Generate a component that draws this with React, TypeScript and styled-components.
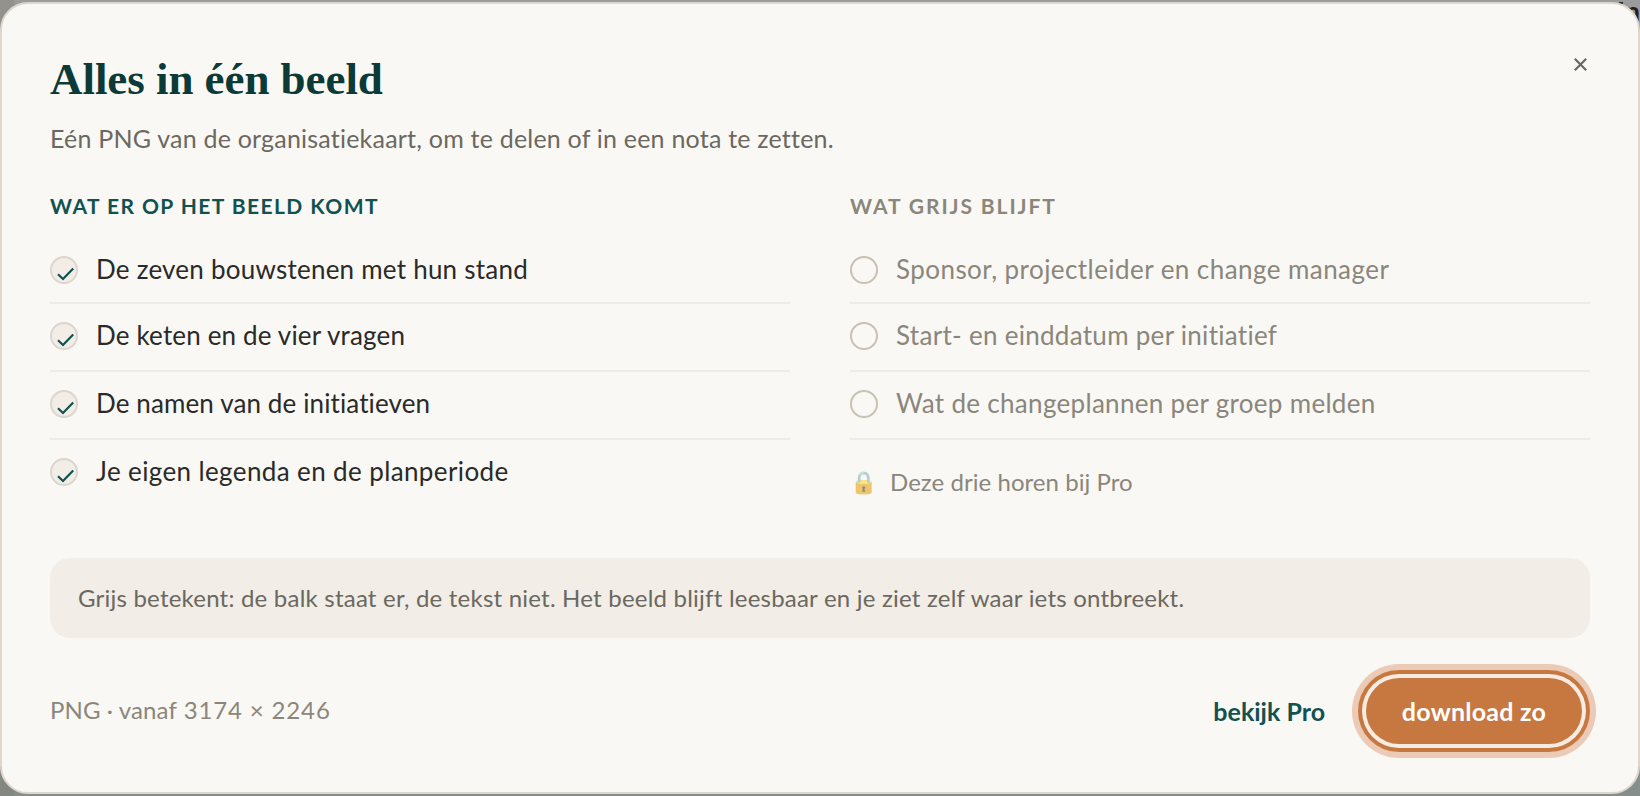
import React from "react";
import styled, { createGlobalStyle } from "styled-components";

const sans = `Lato, "Open Sans", sans-serif`;
const serif = `"Liberation Serif", serif`;

const GlobalStyle = createGlobalStyle`
  * { box-sizing: border-box; }
  body {
    margin: 0;
    font-family: ${sans};
    font-variant-ligatures: none;
    color: #2a2a28;
    overflow: hidden;
  }
  h1, h2, p, ul { margin: 0; padding: 0; }
  button { font: inherit; border: 0; padding: 0; background: none; cursor: pointer; }
`;

const Backdrop = styled.div`
  position: relative;
  height: 796px;
  padding: 2px 0;
  background:
    linear-gradient(90deg, rgba(120, 112, 88, 0.22) 14px, transparent 14px),
    linear-gradient(180deg, #9b9b9b 0, #9b9b9b 50%, #868e8c 50%);
`;

const PageHeading = styled.span`
  position: absolute;
  top: -4px;
  left: 1617px;
  font: 700 27px/30px ${sans};
  color: #222222;
  white-space: nowrap;
`;

const Dialog = styled.section`
  position: relative;
  height: 792px;
  padding: 49px 48px 0;
  border: 2px solid #ddd6cd;
  border-radius: 28px;
  background: #faf8f4;
`;

const Header = styled.header`
  display: flex;
  justify-content: space-between;
  align-items: flex-start;
`;

const Title = styled.h1`
  font: 700 45px/52px ${serif};
  letter-spacing: -0.05px;
  color: #0c3a37;
  white-space: nowrap;
`;

const Subtitle = styled.p`
  margin-top: 15px;
  font-size: 25px;
  line-height: 36px;
  letter-spacing: 0.21px;
  color: #6b6860;
`;

const CloseButton = styled.button`
  display: flex;
  padding: 5px 3px 0 0;
  color: #6b6860;
`;

const Columns = styled.div`
  display: grid;
  grid-template-columns: 1fr 1fr;
  gap: 60px;
  height: 365px;
  margin-top: 37px;
`;

const ColumnLabel = styled.h2<{ $muted?: boolean; $tracking: number }>`
  margin-bottom: 17px;
  font-size: 21px;
  font-weight: 700;
  line-height: 26px;
  letter-spacing: ${(p) => p.$tracking}px;
  text-transform: uppercase;
  color: ${(p) => (p.$muted ? "#8a867b" : "#115250")};
`;

const List = styled.ul`
  list-style: none;
`;

const Item = styled.li<{ $muted?: boolean; $last?: boolean }>`
  display: flex;
  align-items: center;
  gap: 18px;
  height: 68px;
  padding-bottom: 2px;
  border-bottom: 2px solid ${(p) => (p.$last ? "transparent" : "#f0ebe4")};
  color: ${(p) => (p.$muted ? "#8a867b" : "#2a2a28")};

  &:first-child {
    padding: 2px 0 0;
  }
`;

const ItemText = styled.span<{ $tracking: number }>`
  padding-bottom: 2px;
  font-size: 26px;
  line-height: 30px;
  letter-spacing: ${(p) => p.$tracking}px;
  white-space: nowrap;
`;

const Marker = styled.span<{ $checked?: boolean }>`
  display: flex;
  flex: none;
  width: 28px;
  height: 28px;
  border: 2px solid ${(p) => (p.$checked ? "#ddd6cd" : "#c9c1b3")};
  border-radius: 50%;
  background: ${(p) => (p.$checked ? "#f2ede7" : "transparent")};
`;

const ProHint = styled.p`
  display: flex;
  align-items: center;
  gap: 13px;
  margin-top: 26px;
  font-size: 24px;
  line-height: 30px;
  letter-spacing: 0.05px;
  color: #8a867b;
`;

const Lock = styled.span`
  display: flex;
  justify-content: center;
  width: 27px;
  padding-top: 1px;
  font-size: 22px;
  line-height: 30px;
  opacity: 0.6;
`;

const Note = styled.p`
  display: flex;
  align-items: center;
  height: 80px;
  padding: 0 28px 2px;
  border-radius: 20px;
  background: #f2ede7;
  font-size: 24px;
  letter-spacing: 0.215px;
  white-space: nowrap;
  color: #6b6860;
`;

const Footer = styled.footer`
  display: flex;
  align-items: center;
  height: 82px;
  margin-top: 32px;
`;

const FileInfo = styled.span`
  flex: 1;
  padding-bottom: 4px;
  font-size: 24px;
  letter-spacing: 0.1px;
  color: #8a867b;
`;

const Dimensions = styled.span`
  margin-left: 1px;
  letter-spacing: 0.85px;
`;

const LinkButton = styled.button`
  margin-right: 33px;
  padding-bottom: 1px;
  font-size: 25px;
  font-weight: 700;
  color: #115250;
`;

const PrimaryButton = styled.button`
  width: 232px;
  height: 82px;
  padding-bottom: 1px;
  border-radius: 41px;
  background: #c77840;
  box-shadow:
    0 0 0 6px #ebcbb6,
    inset 0 0 0 4px #c77840,
    inset 0 0 0 8px #f8ebe2;
  font-size: 25px;
  font-weight: 700;
  letter-spacing: 0.24px;
  color: #ffffff;
`;

const included = [
  { text: "De zeven bouwstenen met hun stand", tracking: 0.23 },
  { text: "De keten en de vier vragen", tracking: 0.16 },
  { text: "De namen van de initiatieven", tracking: 0.12 },
  { text: "Je eigen legenda en de planperiode", tracking: 0.38 },
];

const greyed = [
  { text: "Sponsor, projectleider en change manager", tracking: 0.44 },
  { text: "Start- en einddatum per initiatief", tracking: 0.29 },
  { text: "Wat de changeplannen per groep melden", tracking: 0.31 },
];

const Check = () => (
  <svg width="24" height="24" viewBox="0 0 24 24" fill="none" stroke="#115250" strokeWidth="2.2">
    <path d="M6 16.2 L11 21 L21.2 10.5" />
  </svg>
);

const Cross = () => (
  <svg width="13" height="13" viewBox="0 0 13 13" fill="none" stroke="currentColor" strokeWidth="2.2">
    <path d="M0.8 0.8 L12.2 12.2 M12.2 0.8 L0.8 12.2" />
  </svg>
);

export default function App() {
  return (
    <Backdrop>
      <GlobalStyle />
      <PageHeading>In</PageHeading>
      <Dialog role="dialog" aria-labelledby="title">
        <Header>
          <div>
            <Title id="title">Alles in één beeld</Title>
            <Subtitle>Eén PNG van de organisatiekaart, om te delen of in een nota te zetten.</Subtitle>
          </div>
          <CloseButton aria-label="Sluiten">
            <Cross />
          </CloseButton>
        </Header>

        <Columns>
          <div>
            <ColumnLabel $tracking={1.43}>Wat er op het beeld komt</ColumnLabel>
            <List>
              {included.map((item, i) => (
                <Item key={item.text} $last={i === included.length - 1}>
                  <Marker $checked>
                    <Check />
                  </Marker>
                  <ItemText $tracking={item.tracking}>{item.text}</ItemText>
                </Item>
              ))}
            </List>
          </div>
          <div>
            <ColumnLabel $muted $tracking={1.9}>
              Wat grijs blijft
            </ColumnLabel>
            <List>
              {greyed.map((item) => (
                <Item key={item.text} $muted>
                  <Marker />
                  <ItemText $tracking={item.tracking}>{item.text}</ItemText>
                </Item>
              ))}
            </List>
            <ProHint>
              <Lock>🔒</Lock>
              Deze drie horen bij Pro
            </ProHint>
          </div>
        </Columns>

        <Note>
          Grijs betekent: de balk staat er, de tekst niet. Het beeld blijft leesbaar en je ziet zelf waar iets ontbreekt.
        </Note>

        <Footer>
          <FileInfo>
            PNG · vanaf <Dimensions>3174 × 2246</Dimensions>
          </FileInfo>
          <LinkButton>bekijk Pro</LinkButton>
          <PrimaryButton>download zo</PrimaryButton>
        </Footer>
      </Dialog>
    </Backdrop>
  );
}
